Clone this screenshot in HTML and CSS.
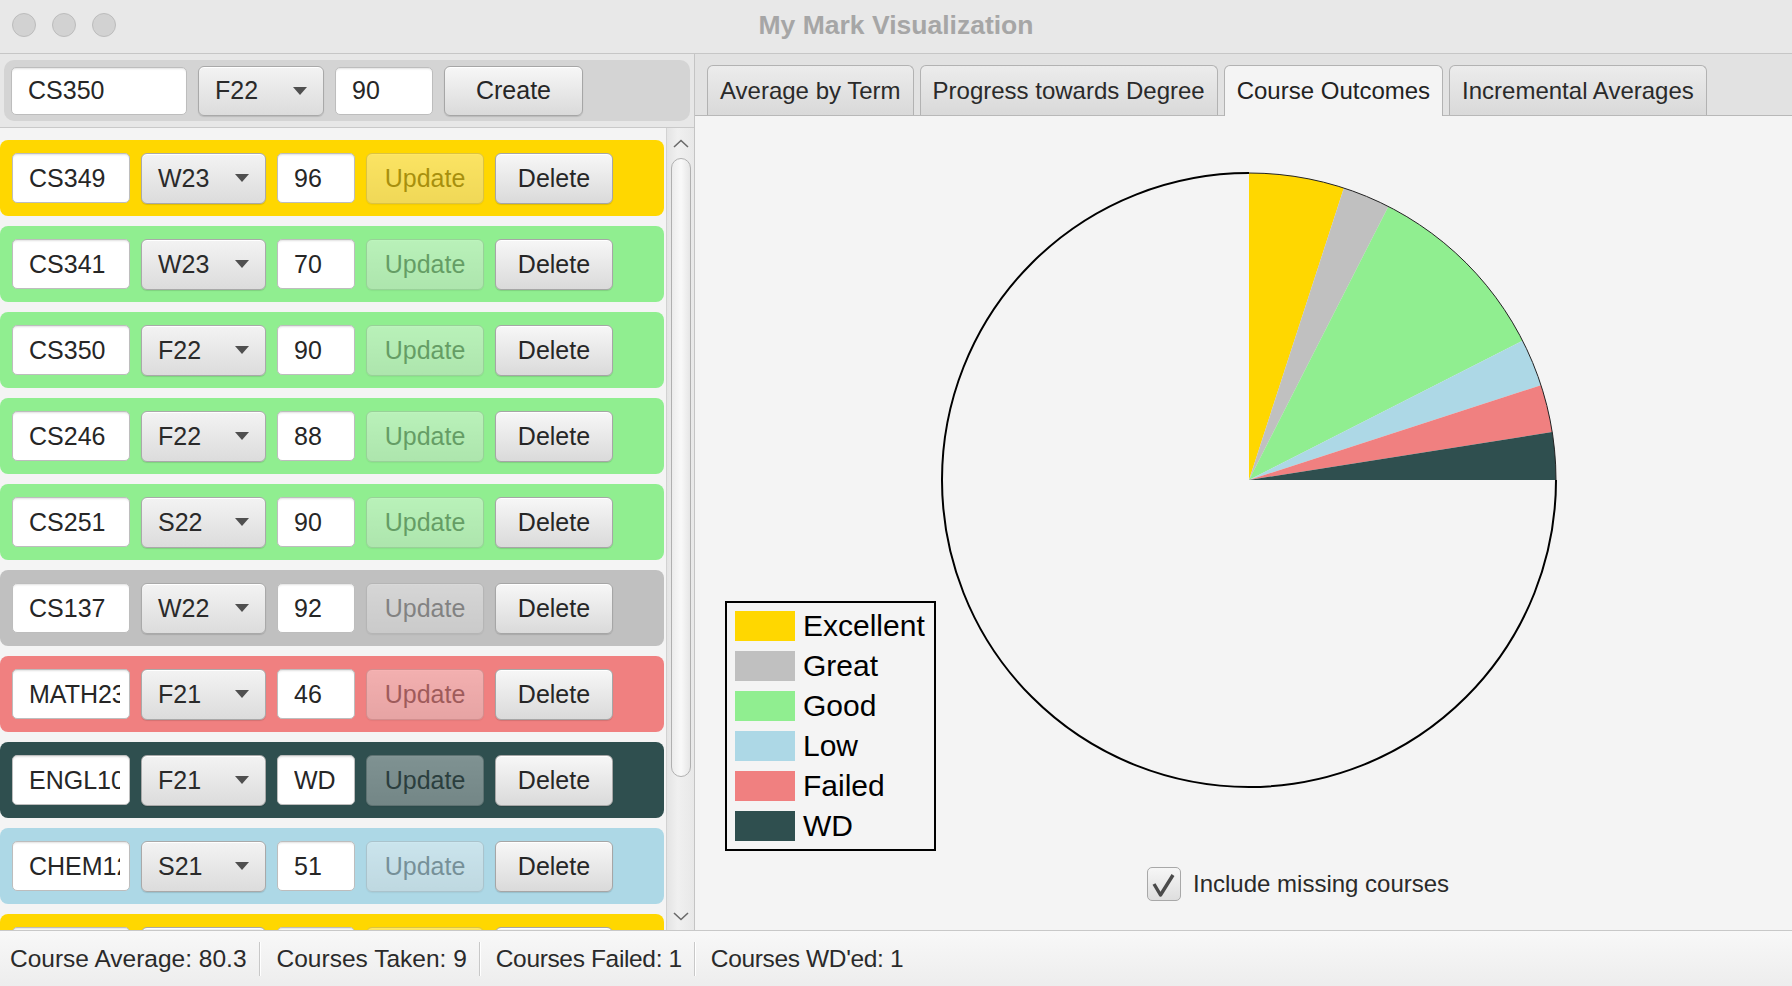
FILE: index.html
```html
<!DOCTYPE html>
<html>
<head>
<meta charset="utf-8">
<title>My Mark Visualization</title>
<link rel="stylesheet" href="styles.css">
</head>
<body>
<div class="window">
  <div class="titlebar">
    <div class="lights"><span></span><span></span><span></span></div>
    <div class="title">My Mark Visualization</div>
    <div></div>
  </div>
  <div class="main">
    <div class="left">
      <div class="create-bar">
        <div class="create-box">
          <div class="field cname"><span>CS350</span></div>
          <div class="combo"><span>F22</span><i class="arrow"></i></div>
          <div class="field cscore"><span>90</span></div>
          <div class="btn create">Create</div>
        </div>
      </div>
      <div class="list-area">
        <div class="rows">
          <div class="row gold">
            <div class="field name"><span>CS349</span></div>
            <div class="combo"><span>W23</span><i class="arrow"></i></div>
            <div class="field score"><span>96</span></div>
            <div class="btn update">Update</div>
            <div class="btn delete">Delete</div>
          </div>
          <div class="row green">
            <div class="field name"><span>CS341</span></div>
            <div class="combo"><span>W23</span><i class="arrow"></i></div>
            <div class="field score"><span>70</span></div>
            <div class="btn update">Update</div>
            <div class="btn delete">Delete</div>
          </div>
          <div class="row green">
            <div class="field name"><span>CS350</span></div>
            <div class="combo"><span>F22</span><i class="arrow"></i></div>
            <div class="field score"><span>90</span></div>
            <div class="btn update">Update</div>
            <div class="btn delete">Delete</div>
          </div>
          <div class="row green">
            <div class="field name"><span>CS246</span></div>
            <div class="combo"><span>F22</span><i class="arrow"></i></div>
            <div class="field score"><span>88</span></div>
            <div class="btn update">Update</div>
            <div class="btn delete">Delete</div>
          </div>
          <div class="row green">
            <div class="field name"><span>CS251</span></div>
            <div class="combo"><span>S22</span><i class="arrow"></i></div>
            <div class="field score"><span>90</span></div>
            <div class="btn update">Update</div>
            <div class="btn delete">Delete</div>
          </div>
          <div class="row silver">
            <div class="field name"><span>CS137</span></div>
            <div class="combo"><span>W22</span><i class="arrow"></i></div>
            <div class="field score"><span>92</span></div>
            <div class="btn update">Update</div>
            <div class="btn delete">Delete</div>
          </div>
          <div class="row coral">
            <div class="field name"><span>MATH239</span></div>
            <div class="combo"><span>F21</span><i class="arrow"></i></div>
            <div class="field score"><span>46</span></div>
            <div class="btn update">Update</div>
            <div class="btn delete">Delete</div>
          </div>
          <div class="row slate">
            <div class="field name"><span>ENGL109</span></div>
            <div class="combo"><span>F21</span><i class="arrow"></i></div>
            <div class="field score"><span>WD</span></div>
            <div class="btn update">Update</div>
            <div class="btn delete">Delete</div>
          </div>
          <div class="row blue">
            <div class="field name"><span>CHEM120</span></div>
            <div class="combo"><span>S21</span><i class="arrow"></i></div>
            <div class="field score"><span>51</span></div>
            <div class="btn update">Update</div>
            <div class="btn delete">Delete</div>
          </div>
          <div class="row gold">
            <div class="field name"></div>
            <div class="combo"></div>
            <div class="field score"></div>
            <div class="btn update"></div>
            <div class="btn delete"></div>
          </div>
        </div>
        <div class="scrollbar">
          <svg class="chev" width="16" height="9" viewBox="0 0 16 9"><path d="M1 8 L8 1.5 L15 8" fill="none" stroke="#6a6a6a" stroke-width="1.6"/></svg>
          <div class="thumb"></div>
          <div class="spacer"></div>
          <svg class="chev" width="16" height="9" viewBox="0 0 16 9"><path d="M1 1 L8 7.5 L15 1" fill="none" stroke="#6a6a6a" stroke-width="1.6"/></svg>
        </div>
      </div>
    </div>
    <div class="right">
      <div class="tabbar">
        <div class="tab">Average by Term</div>
        <div class="tab">Progress towards Degree</div>
        <div class="tab selected">Course Outcomes</div>
        <div class="tab">Incremental Averages</div>
      </div>
      <div class="content">
        <div class="chart-row">
          <div class="legend">
            <div class="item"><i class="sw gold"></i>Excellent</div>
            <div class="item"><i class="sw silver"></i>Great</div>
            <div class="item"><i class="sw green"></i>Good</div>
            <div class="item"><i class="sw blue"></i>Low</div>
            <div class="item"><i class="sw coral"></i>Failed</div>
            <div class="item"><i class="sw slate"></i>WD</div>
          </div>
          <svg class="pie" width="616" height="616" viewBox="0 0 616 616">
            <path d="M308 308 L308 1 A307 307 0 0 1 402.87 16.03 Z" fill="#FFD700"/>
            <path d="M308 308 L402.87 16.03 A307 307 0 0 1 447.37 34.46 Z" fill="#C0C0C0"/>
            <path d="M308 308 L447.37 34.46 A307 307 0 0 1 581.54 168.63 Z" fill="#90EE90"/>
            <path d="M308 308 L581.54 168.63 A307 307 0 0 1 599.97 213.13 Z" fill="#ADD8E6"/>
            <path d="M308 308 L599.97 213.13 A307 307 0 0 1 611.22 259.98 Z" fill="#F08080"/>
            <path d="M308 308 L611.22 259.98 A307 307 0 0 1 615 308 Z" fill="#2F4F4F"/>
            <path d="M308 1 A307 307 0 0 1 615 308" fill="none" stroke="#222" stroke-width="1"/>
            <path d="M615 308 A307 307 0 1 1 308 1" fill="none" stroke="#000" stroke-width="2"/>
          </svg>
        </div>
        <div class="check-row">
          <div class="checkbox"><svg width="34" height="34" viewBox="0 0 34 34"><path d="M7 17 L13.5 28 L26 8" fill="none" stroke="#4a4a4a" stroke-width="3.4" stroke-linejoin="round"/></svg></div>
          <span class="check-label">Include missing courses</span>
        </div>
      </div>
    </div>
  </div>
  <div class="statusbar">
    <div class="stat first">Course Average: 80.3</div>
    <div class="sep"></div>
    <div class="stat">Courses Taken: 9</div>
    <div class="sep"></div>
    <div class="stat tight">Courses Failed: 1</div>
    <div class="sep"></div>
    <div class="stat tight">Courses WD'ed: 1</div>
  </div>
</div>
</body>
</html>
```

FILE: styles.css
```css
* { box-sizing: border-box; }
html, body { margin: 0; padding: 0; }
body {
  width: 1792px;
  height: 986px;
  overflow: hidden;
  background: #f4f4f4;
  color: #333;
  font-family: "Liberation Sans", Arial, sans-serif;
}
.window { display: flex; flex-direction: column; height: 986px; }

/* title bar */
.titlebar {
  flex: none;
  height: 54px;
  background: #e8e8e8;
  border-bottom: 1px solid #c6c6c6;
  display: grid;
  grid-template-columns: 1fr auto 1fr;
  align-items: center;
  padding-bottom: 3px;
}
.lights { display: flex; gap: 16px; padding-left: 12px; }
.lights span {
  width: 24px; height: 24px; border-radius: 50%;
  background: #d2d2d2;
  border: 1px solid #bcbcbc;
}
.title {
  font-weight: bold;
  font-size: 26.5px;
  color: #a6a6a6;
}

/* main */
.main { flex: 1; display: flex; min-height: 0; }
.left {
  width: 695px;
  flex: none;
  display: flex;
  flex-direction: column;
  border-right: 1px solid #c4c4c4;
}
.create-bar {
  flex: none;
  height: 74px;
  padding: 6px 4px 6px 4px;
  background: #e7e7e7;
  border-bottom: 1px solid #c9c9c9;
}
.create-box {
  height: 61px;
  background: #d4d4d4;
  border-radius: 10px;
  display: flex;
  align-items: center;
  gap: 11px;
  padding-left: 7px;
}

.field {
  background: #fff;
  border: 1px solid #bdbdbd;
  border-radius: 5px;
  box-shadow: inset 0 2px 2px -1px rgba(0,0,0,0.12);
  height: 50px;
  display: flex;
  align-items: center;
  padding: 0 9px 0 16px;
  font-size: 25px;
  color: #262626;
  overflow: hidden;
  flex: none;
}
.field span { overflow: hidden; white-space: nowrap; display: block; }
.cname { width: 176px; height: 48px; }
.cscore { width: 98px; height: 48px; }
.name { width: 118px; }
.score { width: 78px; }

.combo {
  flex: none;
  height: 51px;
  width: 125px;
  border: 1px solid #a9a9a9;
  border-radius: 6px;
  background: linear-gradient(#f3f3f3, #dcdcdc);
  box-shadow: 0 1px 1px rgba(0,0,0,0.12), inset 0 1px 0 #fff;
  display: flex;
  align-items: center;
  justify-content: space-between;
  padding: 0 16px 0 16px;
  font-size: 25px;
  color: #2a2a2a;
}
.combo .arrow {
  width: 0; height: 0;
  border-left: 7px solid transparent;
  border-right: 7px solid transparent;
  border-top: 8px solid #4f4f4f;
}
.cname + .combo { width: 126px; height: 50px; }

.btn {
  flex: none;
  height: 51px;
  width: 118px;
  border: 1px solid #a6a6a6;
  border-radius: 6px;
  background: linear-gradient(#f7f7f7, #dadada);
  box-shadow: 0 1px 1px rgba(0,0,0,0.12), inset 0 1px 0 #fff;
  display: flex;
  align-items: center;
  justify-content: center;
  font-size: 25px;
  color: #262626;
}
.create { width: 139px; height: 50px; }
.update { opacity: 0.4; }

/* list */
.list-area { flex: 1; display: flex; min-height: 0; overflow: hidden; background: #f4f4f4; }
.rows {
  width: 666px;
  flex: none;
  display: flex;
  flex-direction: column;
  gap: 10px;
  padding-top: 12px;
  overflow: hidden;
}
.row {
  flex: none;
  width: 664px;
  height: 76px;
  border-radius: 8px;
  display: flex;
  align-items: center;
  gap: 11px;
  padding-left: 12px;
}
.gold { background: #FFD700; }
.green { background: #90EE90; }
.silver { background: #C0C0C0; }
.coral { background: #F08080; }
.slate { background: #2F4F4F; }
.blue { background: #ADD8E6; }

.scrollbar {
  width: 28px;
  flex: none;
  background: linear-gradient(90deg, #e4e4e4, #f0f0f0 40%, #e8e8e8);
  border-left: 1px solid #d2d2d2;
  display: flex;
  flex-direction: column;
  align-items: center;
  padding: 11px 0 9px 0;
}
.scrollbar .chev { flex: none; display: block; }
.thumb {
  flex: none;
  margin-top: 10px;
  width: 20px;
  height: 619px;
  border: 1px solid #b0b0b0;
  border-radius: 10px;
  background: linear-gradient(90deg, #ececec, #f9f9f9 50%, #e6e6e6);
}
.scrollbar .spacer { flex: 1; }

/* right */
.right { flex: 1; display: flex; flex-direction: column; min-width: 0; }
.tabbar {
  flex: none;
  height: 62px;
  background: #e2e2e2;
  border-bottom: 1px solid #b8b8b8;
  display: flex;
  align-items: flex-end;
  gap: 6px;
  padding-left: 12px;
}
.tab {
  height: 50px;
  padding: 0 12px;
  border: 1px solid #b2b2b2;
  border-bottom: none;
  border-radius: 6px 6px 0 0;
  background: linear-gradient(#ececec, #d9d9d9);
  display: flex;
  align-items: center;
  font-size: 24px;
  color: #2a2a2a;
}
.tab.selected {
  background: #f4f4f4;
  height: 51px;
  margin-bottom: -1px;
  color: #222;
}

.content { flex: 1; background: #f4f4f4; display: flex; flex-direction: column; }
.chart-row { display: flex; padding: 56px 0 0 30px; }
.legend {
  margin-top: 429px;
  height: 250px;
  border: 2px solid #000;
  padding: 8px 9px 8px 8px;
  display: flex;
  flex-direction: column;
  gap: 10px;
}
.legend .item {
  height: 30px;
  display: flex;
  align-items: center;
  gap: 8px;
  font-size: 30px;
  color: #000;
  white-space: nowrap;
}
.legend .sw { width: 60px; height: 30px; flex: none; display: block; }
.pie { margin-left: 5px; flex: none; display: block; }

.check-row {
  margin-top: 16px;
  padding-left: 452px;
  display: flex;
  align-items: center;
  gap: 12px;
}
.checkbox {
  width: 34px; height: 34px;
  border: 1px solid #a8a8a8;
  border-radius: 5px;
  background: linear-gradient(#f6f6f6, #dedede);
}
.checkbox svg { display: block; margin: -1px; }
.check-label { font-size: 24px; color: #2a2a2a; }

/* status */
.statusbar {
  flex: none;
  height: 56px;
  border-top: 1px solid #c8c8c8;
  background: linear-gradient(#f8f8f8, #ededed);
  display: flex;
  align-items: center;
  padding-left: 10px;
}
.stat { font-size: 24.5px; color: #2a2a2a; padding: 0 12px 0 16px; white-space: nowrap; }
.stat.first { padding-left: 0; padding-right: 12px; }
.stat.tight { letter-spacing: -0.35px; padding-left: 15px; }
.sep {
  width: 2px; height: 34px;
  border-left: 1px solid #c8c8c8;
  border-right: 1px solid #fff;
}
```
